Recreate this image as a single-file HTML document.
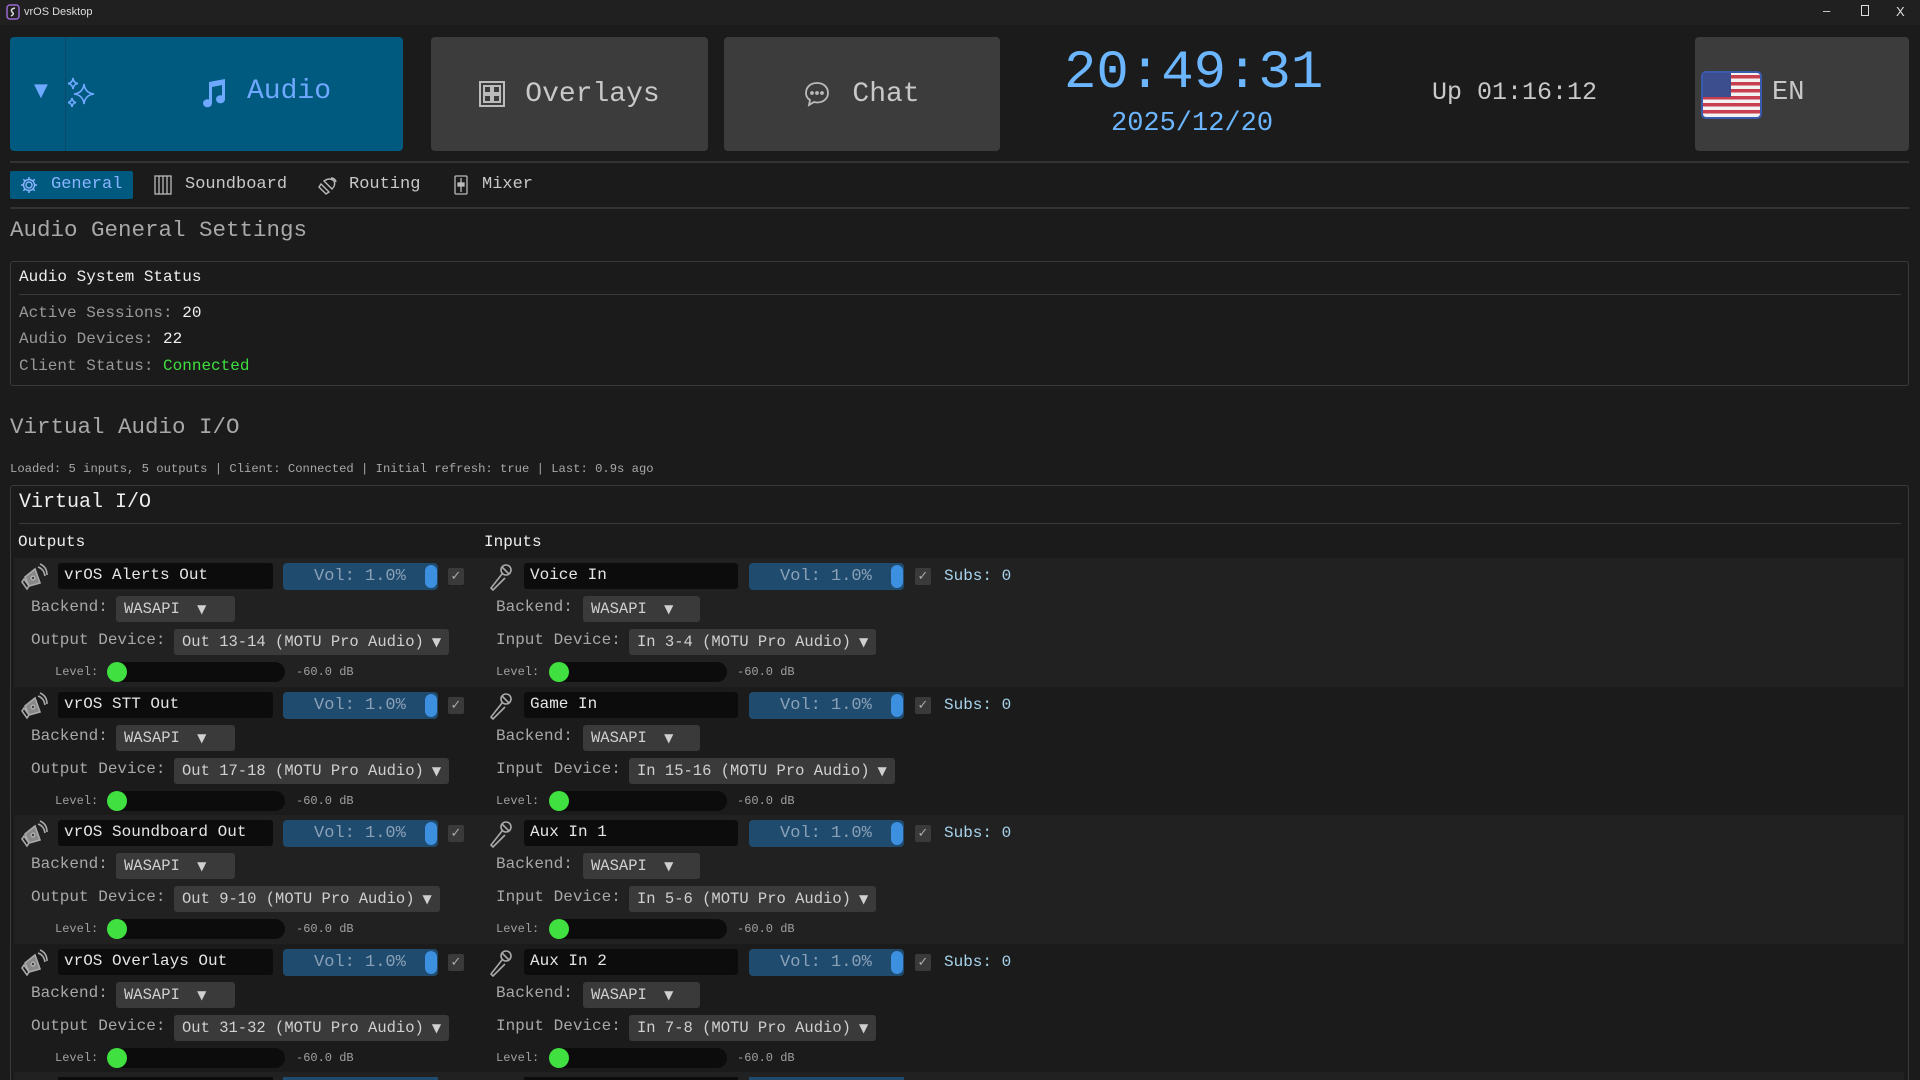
<!DOCTYPE html>
<html><head><meta charset="utf-8"><style>
*{margin:0;padding:0;box-sizing:border-box}
html{width:1920px;height:1080px;overflow:hidden;background:#1b1b1b}
body{width:1920px;height:1080px;overflow:hidden;background:#1b1b1b;font-family:"Liberation Mono","DejaVu Sans Mono",monospace;color:#ccc;position:relative}
.a{position:absolute;white-space:nowrap}
.tb{left:0;top:0;width:1920px;height:25px;background:#202020;font-family:"Liberation Sans",sans-serif;font-size:11px;color:#ddd}
.btn{top:37px;height:114px;border-radius:4px;background:#3c3c3c;display:flex;align-items:center;justify-content:center;font-size:28px;color:#c8c8c8}
.hr{height:2px;background:#333}
.row{position:absolute;left:0;width:1920px;height:130px}
.band{position:absolute;left:14px;width:1890px;top:-5px;height:129px;background:#212121}
.name{position:absolute;top:0;height:26px;background:#0c0c0c;border-radius:3px;font-size:16px;color:#e6e6e6;padding:2px 6px;line-height:20px}
.vol{position:absolute;top:0;height:27px;background:#1f4b6e;border-radius:4px;font-size:17px;color:#8aa0b6;line-height:27px}
.vol b{position:absolute;right:1px;top:2px;width:12px;height:23px;border-radius:6px;background:#3d8fe0}
.chk{position:absolute;top:5px;width:16px;height:17px;background:#3a3a3a;border-radius:2px;color:#aaa;font-size:13px;text-align:center;line-height:17px;font-family:"DejaVu Sans",sans-serif}
.lbl{position:absolute;font-size:16px;color:#a8a8a8;line-height:26px}
.dd{position:absolute;height:26px;background:#3a3a3a;border-radius:3px;font-size:15.5px;color:#d0d0d0;line-height:26px;padding:0 8px}
.dd i{font-style:normal;font-size:12px;font-family:"DejaVu Sans",sans-serif;margin-left:8px}
.sl{position:absolute;font-size:12px;color:#a0a0a0;line-height:20px}
.trk{position:absolute;height:20px;border-radius:10px;background:#0c0c0c}
.knob{position:absolute;width:20px;height:20px;border-radius:50%;background:#3fe03f}
.subs{position:absolute;font-size:16px;color:#a8d4ee;line-height:27px}
.ico{position:absolute}
</style></head><body>
<div class="a tb"><svg class="a" style="left:6px;top:4px" width="14" height="16" viewBox="0 0 14 16"><rect x="1" y="1" width="12" height="14" rx="3" fill="none" stroke="#9a6ad0" stroke-width="1.5"/><path d="M9 4 Q4 5 6 8 Q9 10 5 12" stroke="#ddd" stroke-width="1.5" fill="none"/></svg><span class="a" style="left:24px;top:6px">vrOS Desktop</span>
<span class="a" style="left:1823px;top:3px;font-size:13px">–</span><span class="a" style="left:1861px;top:5px;width:8px;height:11px;border:1px solid #ddd"></span><span class="a" style="left:1896px;top:4px;font-size:13px">X</span></div>

<div class="a btn" style="left:10px;width:393px;background:#005a80;color:#6fa8ff"></div>
<div class="a" style="left:65px;top:37px;width:1px;height:114px;background:#0a4a6a"></div>
<span class="a" style="left:34px;top:80px;font-size:18px;color:#6fa8ff;font-family:'DejaVu Sans'">▼</span>
<svg class="a" style="left:64px;top:76px" width="36" height="34" viewBox="0 0 36 34" fill="none" stroke="#6fa8ff" stroke-width="1.6"><path d="M20 8 Q21 17 30 18 Q21 19 20 28 Q19 19 10 18 Q19 17 20 8Z"/><path d="M9 2 Q9.5 7 14 7.5 Q9.5 8 9 13 Q8.5 8 4 7.5 Q8.5 7 9 2Z"/><path d="M8 22 Q8.5 26 12 26.5 Q8.5 27 8 31 Q7.5 27 4 26.5 Q7.5 26 8 22Z"/></svg>
<svg class="a" style="left:200px;top:78px" width="28" height="30" viewBox="0 0 28 30" fill="#6fa8ff"><path d="M9 4 L25 1 V21 A4.5 4 0 1 1 22 17.5 V7 L12 9 V25 A4.5 4 0 1 1 9 21.5Z"/></svg>
<span class="a" style="left:247px;top:76px;font-size:28px;color:#6fa8ff">Audio</span>

<div class="a btn" style="left:431px;width:277px"><svg width="26" height="26" viewBox="0 0 26 26" fill="none" stroke="#bbb" stroke-width="2" style="margin-right:20px"><rect x="1" y="1" width="24" height="24"/><rect x="5" y="5" width="7" height="7"/><rect x="14" y="5" width="7" height="7"/><rect x="5" y="14" width="7" height="7"/><rect x="14" y="14" width="7" height="7"/></svg>Overlays</div>
<div class="a btn" style="left:724px;width:276px"><svg width="26" height="26" viewBox="0 0 26 26" fill="none" stroke="#bbb" stroke-width="1.8" style="margin-right:22px"><path d="M13 2 C6 2 2 6.5 2 12 C2 15 3.5 17.5 6 19 L5 24 L10 21 C11 21.3 12 21.5 13 21.5 C20 21.5 24 17 24 12 C24 6.5 20 2 13 2Z"/><circle cx="8" cy="12" r="1" fill="#bbb"/><circle cx="13" cy="12" r="1" fill="#bbb"/><circle cx="18" cy="12" r="1" fill="#bbb"/></svg>Chat</div>

<span class="a" style="left:1064px;top:42px;font-size:54px;color:#6cb6ff;line-height:64px">20:49:31</span>
<span class="a" style="left:1111px;top:108px;font-size:27px;color:#6cb6ff;line-height:32px">2025/12/20</span>
<span class="a" style="left:1432px;top:78px;font-size:25px;color:#c8c8c8;line-height:30px">Up 01:16:12</span>

<div class="a btn" style="left:1695px;width:214px;justify-content:flex-start"></div>
<svg class="a" style="left:1701px;top:71px" width="61" height="48" viewBox="0 0 61 48"><rect x="1" y="1" width="59" height="46" rx="4" fill="#f2f2f2" stroke="#3a5ab0" stroke-width="2"/><g fill="#c84050"><rect x="2" y="4" width="57" height="3.5"/><rect x="2" y="11" width="57" height="3.5"/><rect x="2" y="18" width="57" height="3.5"/><rect x="2" y="25" width="57" height="3.5"/><rect x="2" y="32" width="57" height="3.5"/><rect x="2" y="39" width="57" height="3.5"/></g><rect x="2" y="2" width="28" height="24" fill="#3c4e8e"/></svg>
<span class="a" style="left:1772px;top:78px;font-size:27px;color:#c8c8c8;line-height:30px">EN</span>

<div class="a hr" style="left:10px;top:161px;width:1899px"></div>
<div class="a" style="left:10px;top:171px;width:123px;height:28px;background:#005a80;border-radius:2px"></div>
<svg class="a" style="left:20px;top:176px" width="18" height="18" viewBox="0 0 18 18" fill="none" stroke="#8ab4ff" stroke-width="1.4"><circle cx="9" cy="9" r="3"/><path d="M9 1v3M9 14v3M1 9h3M14 9h3M3.3 3.3l2.1 2.1M12.6 12.6l2.1 2.1M3.3 14.7l2.1-2.1M12.6 5.4l2.1-2.1"/><circle cx="9" cy="9" r="5.5"/></svg>
<span class="a" style="left:51px;top:174px;font-size:17px;color:#8ab4ff;line-height:22px">General</span>
<svg class="a" style="left:154px;top:175px" width="18" height="20" viewBox="0 0 18 20" fill="none" stroke="#bbb" stroke-width="1.3"><rect x="1" y="1" width="16" height="18"/><path d="M5 1v18M9 1v18M13 1v18"/></svg>
<span class="a" style="left:185px;top:174px;font-size:17px;color:#c8c8c8;line-height:22px">Soundboard</span>
<svg class="a" style="left:318px;top:175px" width="20" height="20" viewBox="0 0 20 20" fill="none" stroke="#bbb" stroke-width="1.4"><path d="M3 9 L11 17 L8 19 L1 12Z"/><path d="M6 6 Q12 2 16 6 Q18 10 14 14Z"/><path d="M13 3 Q17 3 18 7"/></svg>
<span class="a" style="left:349px;top:174px;font-size:17px;color:#c8c8c8;line-height:22px">Routing</span>
<svg class="a" style="left:454px;top:175px" width="14" height="20" viewBox="0 0 14 20" fill="none" stroke="#bbb" stroke-width="1.3"><rect x="1" y="1" width="12" height="18" rx="1"/><path d="M7 3v14"/><rect x="4" y="8" width="6" height="3" fill="#bbb"/></svg>
<span class="a" style="left:482px;top:174px;font-size:17px;color:#c8c8c8;line-height:22px">Mixer</span>
<div class="a hr" style="left:10px;top:207px;width:1899px"></div>

<span class="a" style="left:10px;top:216px;font-size:22.5px;color:#a8a8a8;line-height:28px">Audio General Settings</span>

<div class="a" style="left:10px;top:261px;width:1899px;height:125px;border:1px solid #3a3a3a;border-radius:3px"></div>
<span class="a" style="left:19px;top:267px;font-size:16px;color:#eee;line-height:20px">Audio System Status</span>
<div class="a" style="left:19px;top:294px;width:1882px;height:1px;background:#3a3a3a"></div>
<span class="a" style="left:19px;top:303px;font-size:16px;color:#999;line-height:20px">Active Sessions: <span style="color:#eee">20</span></span>
<span class="a" style="left:19px;top:329px;font-size:16px;color:#999;line-height:20px">Audio Devices: <span style="color:#eee">22</span></span>
<span class="a" style="left:19px;top:356px;font-size:16px;color:#999;line-height:20px">Client Status: <span style="color:#3ee03e">Connected</span></span>

<span class="a" style="left:10px;top:413px;font-size:22.5px;color:#a8a8a8;line-height:28px">Virtual Audio I/O</span>
<span class="a" style="left:10px;top:461px;font-size:12.2px;color:#a8a8a8;line-height:16px">Loaded: 5 inputs, 5 outputs | Client: Connected | Initial refresh: true | Last: 0.9s ago</span>

<div class="a" style="left:10px;top:485px;width:1899px;height:595px;border:1px solid #3a3a3a;border-bottom:none;border-radius:3px 3px 0 0"></div>
<span class="a" style="left:19px;top:491px;font-size:20px;color:#eee;line-height:24px">Virtual I/O</span>
<div class="a" style="left:19px;top:523px;width:1882px;height:1px;background:#3a3a3a"></div>
<span class="a" style="left:18px;top:532px;font-size:16px;color:#eee;line-height:20px">Outputs</span>
<span class="a" style="left:484px;top:532px;font-size:16px;color:#eee;line-height:20px">Inputs</span>

<div class="row" style="top:563px"><div class="band"></div>
<svg class="ico" style="left:21px;top:0" width="27" height="28" viewBox="0 0 27 28" fill="none" stroke="#aaa" stroke-width="1.6"><path d="M4 14 L14 6 L19 20 L8 23Z" fill="#888"/><path d="M3 16 L8 23 L6 26 L1 19Z"/><path d="M17 4 Q23 6 24 13"/><path d="M19 1 Q26 4 26 12"/><circle cx="12" cy="15" r="1.8" fill="#222"/></svg>
<div class="name" style="left:58px;width:215px">vrOS Alerts Out</div>
<div class="vol" style="left:283px;width:155px"><span style="position:absolute;left:31px">Vol: 1.0%</span><b></b></div>
<div class="chk" style="left:448px">✓</div>
<div class="lbl" style="left:31px;top:31px">Backend:</div><div class="dd" style="left:116px;top:33px;width:119px">WASAPI <i>▼</i></div>
<div class="lbl" style="left:31px;top:64px">Output Device:</div><div class="dd" style="left:174px;top:66px">Out 13-14 (MOTU Pro Audio)<i>▼</i></div>
<div class="sl" style="left:55px;top:99px">Level:</div><div class="trk" style="left:109px;top:99px;width:176px"></div><div class="knob" style="left:107px;top:99px"></div><div class="sl" style="left:296px;top:99px">-60.0 dB</div>
<svg class="ico" style="left:487px;top:0" width="26" height="28" viewBox="0 0 26 28" fill="none" stroke="#aaa" stroke-width="1.6"><circle cx="19" cy="7" r="5"/><path d="M15 11 L4 25 L6 27 L18 15"/><path d="M15 4 L22 11"/></svg>
<div class="name" style="left:524px;width:214px">Voice In</div>
<div class="vol" style="left:749px;width:155px"><span style="position:absolute;left:31px">Vol: 1.0%</span><b></b></div>
<div class="chk" style="left:915px">✓</div><div class="subs" style="left:944px">Subs: 0</div>
<div class="lbl" style="left:496px;top:31px">Backend:</div><div class="dd" style="left:583px;top:33px;width:117px">WASAPI <i>▼</i></div>
<div class="lbl" style="left:496px;top:64px">Input Device:</div><div class="dd" style="left:629px;top:66px">In 3-4 (MOTU Pro Audio)<i>▼</i></div>
<div class="sl" style="left:496px;top:99px">Level:</div><div class="trk" style="left:550px;top:99px;width:177px"></div><div class="knob" style="left:549px;top:99px"></div><div class="sl" style="left:737px;top:99px">-60.0 dB</div>
</div>

<div class="row" style="top:691.5px">
<svg class="ico" style="left:21px;top:0" width="27" height="28" viewBox="0 0 27 28" fill="none" stroke="#aaa" stroke-width="1.6"><path d="M4 14 L14 6 L19 20 L8 23Z" fill="#888"/><path d="M3 16 L8 23 L6 26 L1 19Z"/><path d="M17 4 Q23 6 24 13"/><path d="M19 1 Q26 4 26 12"/><circle cx="12" cy="15" r="1.8" fill="#222"/></svg>
<div class="name" style="left:58px;width:215px">vrOS STT Out</div>
<div class="vol" style="left:283px;width:155px"><span style="position:absolute;left:31px">Vol: 1.0%</span><b></b></div>
<div class="chk" style="left:448px">✓</div>
<div class="lbl" style="left:31px;top:31px">Backend:</div><div class="dd" style="left:116px;top:33px;width:119px">WASAPI <i>▼</i></div>
<div class="lbl" style="left:31px;top:64px">Output Device:</div><div class="dd" style="left:174px;top:66px">Out 17-18 (MOTU Pro Audio)<i>▼</i></div>
<div class="sl" style="left:55px;top:99px">Level:</div><div class="trk" style="left:109px;top:99px;width:176px"></div><div class="knob" style="left:107px;top:99px"></div><div class="sl" style="left:296px;top:99px">-60.0 dB</div>
<svg class="ico" style="left:487px;top:0" width="26" height="28" viewBox="0 0 26 28" fill="none" stroke="#aaa" stroke-width="1.6"><circle cx="19" cy="7" r="5"/><path d="M15 11 L4 25 L6 27 L18 15"/><path d="M15 4 L22 11"/></svg>
<div class="name" style="left:524px;width:214px">Game In</div>
<div class="vol" style="left:749px;width:155px"><span style="position:absolute;left:31px">Vol: 1.0%</span><b></b></div>
<div class="chk" style="left:915px">✓</div><div class="subs" style="left:944px">Subs: 0</div>
<div class="lbl" style="left:496px;top:31px">Backend:</div><div class="dd" style="left:583px;top:33px;width:117px">WASAPI <i>▼</i></div>
<div class="lbl" style="left:496px;top:64px">Input Device:</div><div class="dd" style="left:629px;top:66px">In 15-16 (MOTU Pro Audio)<i>▼</i></div>
<div class="sl" style="left:496px;top:99px">Level:</div><div class="trk" style="left:550px;top:99px;width:177px"></div><div class="knob" style="left:549px;top:99px"></div><div class="sl" style="left:737px;top:99px">-60.0 dB</div>
</div>

<div class="row" style="top:820px"><div class="band"></div>
<svg class="ico" style="left:21px;top:0" width="27" height="28" viewBox="0 0 27 28" fill="none" stroke="#aaa" stroke-width="1.6"><path d="M4 14 L14 6 L19 20 L8 23Z" fill="#888"/><path d="M3 16 L8 23 L6 26 L1 19Z"/><path d="M17 4 Q23 6 24 13"/><path d="M19 1 Q26 4 26 12"/><circle cx="12" cy="15" r="1.8" fill="#222"/></svg>
<div class="name" style="left:58px;width:215px">vrOS Soundboard Out</div>
<div class="vol" style="left:283px;width:155px"><span style="position:absolute;left:31px">Vol: 1.0%</span><b></b></div>
<div class="chk" style="left:448px">✓</div>
<div class="lbl" style="left:31px;top:31px">Backend:</div><div class="dd" style="left:116px;top:33px;width:119px">WASAPI <i>▼</i></div>
<div class="lbl" style="left:31px;top:64px">Output Device:</div><div class="dd" style="left:174px;top:66px">Out 9-10 (MOTU Pro Audio)<i>▼</i></div>
<div class="sl" style="left:55px;top:99px">Level:</div><div class="trk" style="left:109px;top:99px;width:176px"></div><div class="knob" style="left:107px;top:99px"></div><div class="sl" style="left:296px;top:99px">-60.0 dB</div>
<svg class="ico" style="left:487px;top:0" width="26" height="28" viewBox="0 0 26 28" fill="none" stroke="#aaa" stroke-width="1.6"><circle cx="19" cy="7" r="5"/><path d="M15 11 L4 25 L6 27 L18 15"/><path d="M15 4 L22 11"/></svg>
<div class="name" style="left:524px;width:214px">Aux In 1</div>
<div class="vol" style="left:749px;width:155px"><span style="position:absolute;left:31px">Vol: 1.0%</span><b></b></div>
<div class="chk" style="left:915px">✓</div><div class="subs" style="left:944px">Subs: 0</div>
<div class="lbl" style="left:496px;top:31px">Backend:</div><div class="dd" style="left:583px;top:33px;width:117px">WASAPI <i>▼</i></div>
<div class="lbl" style="left:496px;top:64px">Input Device:</div><div class="dd" style="left:629px;top:66px">In 5-6 (MOTU Pro Audio)<i>▼</i></div>
<div class="sl" style="left:496px;top:99px">Level:</div><div class="trk" style="left:550px;top:99px;width:177px"></div><div class="knob" style="left:549px;top:99px"></div><div class="sl" style="left:737px;top:99px">-60.0 dB</div>
</div>

<div class="row" style="top:948.5px">
<svg class="ico" style="left:21px;top:0" width="27" height="28" viewBox="0 0 27 28" fill="none" stroke="#aaa" stroke-width="1.6"><path d="M4 14 L14 6 L19 20 L8 23Z" fill="#888"/><path d="M3 16 L8 23 L6 26 L1 19Z"/><path d="M17 4 Q23 6 24 13"/><path d="M19 1 Q26 4 26 12"/><circle cx="12" cy="15" r="1.8" fill="#222"/></svg>
<div class="name" style="left:58px;width:215px">vrOS Overlays Out</div>
<div class="vol" style="left:283px;width:155px"><span style="position:absolute;left:31px">Vol: 1.0%</span><b></b></div>
<div class="chk" style="left:448px">✓</div>
<div class="lbl" style="left:31px;top:31px">Backend:</div><div class="dd" style="left:116px;top:33px;width:119px">WASAPI <i>▼</i></div>
<div class="lbl" style="left:31px;top:64px">Output Device:</div><div class="dd" style="left:174px;top:66px">Out 31-32 (MOTU Pro Audio)<i>▼</i></div>
<div class="sl" style="left:55px;top:99px">Level:</div><div class="trk" style="left:109px;top:99px;width:176px"></div><div class="knob" style="left:107px;top:99px"></div><div class="sl" style="left:296px;top:99px">-60.0 dB</div>
<svg class="ico" style="left:487px;top:0" width="26" height="28" viewBox="0 0 26 28" fill="none" stroke="#aaa" stroke-width="1.6"><circle cx="19" cy="7" r="5"/><path d="M15 11 L4 25 L6 27 L18 15"/><path d="M15 4 L22 11"/></svg>
<div class="name" style="left:524px;width:214px">Aux In 2</div>
<div class="vol" style="left:749px;width:155px"><span style="position:absolute;left:31px">Vol: 1.0%</span><b></b></div>
<div class="chk" style="left:915px">✓</div><div class="subs" style="left:944px">Subs: 0</div>
<div class="lbl" style="left:496px;top:31px">Backend:</div><div class="dd" style="left:583px;top:33px;width:117px">WASAPI <i>▼</i></div>
<div class="lbl" style="left:496px;top:64px">Input Device:</div><div class="dd" style="left:629px;top:66px">In 7-8 (MOTU Pro Audio)<i>▼</i></div>
<div class="sl" style="left:496px;top:99px">Level:</div><div class="trk" style="left:550px;top:99px;width:177px"></div><div class="knob" style="left:549px;top:99px"></div><div class="sl" style="left:737px;top:99px">-60.0 dB</div>
</div>

<div class="a" style="left:14px;top:1072px;width:1890px;height:8px;background:#212121"></div>
<div class="a" style="left:58px;top:1077px;width:215px;height:3px;background:#0c0c0c"></div>
<div class="a" style="left:283px;top:1077px;width:155px;height:3px;background:#1f4b6e"></div>
<div class="a" style="left:524px;top:1077px;width:214px;height:3px;background:#0c0c0c"></div>
<div class="a" style="left:749px;top:1077px;width:155px;height:3px;background:#1f4b6e"></div>
</body></html>
